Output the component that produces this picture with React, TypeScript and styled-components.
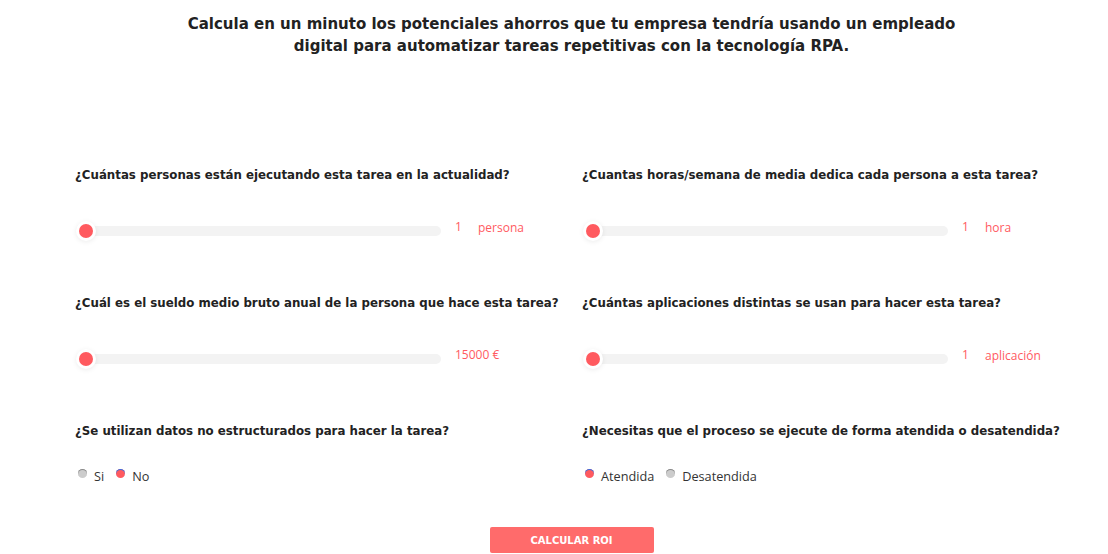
import React, { useState } from 'react'
import styled, { createGlobalStyle } from 'styled-components'

const GlobalStyle = createGlobalStyle`
  body {
    margin: 0;
    background: #ffffff;
    font-family: "Open Sans", "Liberation Sans", sans-serif;
  }
`

const Page = styled.div`
  width: 993px;
  margin-left: 75px;
  padding-top: 13px;
`

const Title = styled.h1`
  margin: 0 auto;
  width: 800px;
  text-align: center;
  font-family: "DejaVu Sans", sans-serif;
  font-weight: 700;
  font-size: 15px;
  line-height: 22px;
  color: #222222;
`

const Form = styled.div`
  display: grid;
  grid-template-columns: 507px 486px;
  row-gap: 52px;
  margin-top: 108px;
`

const Field = styled.div`
  display: flex;
  flex-direction: column;
`

const Question = styled.div`
  font-family: "DejaVu Sans", sans-serif;
  font-weight: 700;
  font-size: 11.8px;
  line-height: 20px;
  color: #222222;
  white-space: nowrap;
`

const SliderRow = styled.div`
  display: flex;
  align-items: center;
  height: 20px;
  margin-top: 36px;
`

const Track = styled.div`
  position: relative;
  width: 363px;
  height: 10px;
  margin-left: 3px;
  border-radius: 5px;
  background: #f3f3f3;
`

const Thumb = styled.span`
  position: absolute;
  left: 1px;
  top: -2px;
  width: 14px;
  height: 14px;
  border-radius: 50%;
  background: #ff5a5f;
  box-shadow: 0 0 0 3px #ffffff, 0 1px 5px 3px rgba(0, 0, 0, 0.08);
`

const Value = styled.span`
  min-width: 23px;
  margin-left: 14px;
  margin-top: -9px;
  font-size: 12px;
  color: #ff5a5f;
  white-space: nowrap;
`

const Unit = styled.span`
  margin-top: -7px;
  font-size: 12px;
  color: #ff5a5f;
`

const RadioRow = styled.div`
  display: flex;
  align-items: center;
  height: 20px;
  margin-top: 25px;
  padding-left: 3px;
  gap: 12px;
`

const RadioLabel = styled.label`
  display: flex;
  align-items: center;
  gap: 7px;
  font-size: 12.7px;
  color: #333333;
  cursor: pointer;
`

const Dot = styled.span<{ $on: boolean }>`
  width: 9px;
  height: 9px;
  margin-top: -5px;
  border-radius: 50%;
  background: ${({ $on }) => ($on ? '#ff5a5f' : '#cccccc')};
  box-shadow: ${({ $on }) =>
    $on ? 'inset 0 1px 0 0 #3b6fe0' : 'inset 0 1px 0 0 #8a8a8a'};
`

const ButtonRow = styled.div`
  display: flex;
  justify-content: center;
  margin-top: 41px;
`

const Button = styled.button`
  width: 164px;
  height: 26px;
  border: none;
  border-radius: 2px;
  background: #ff6b6b;
  color: #ffffff;
  font-family: "DejaVu Sans", sans-serif;
  font-weight: 700;
  font-size: 10px;
  padding-top: 2px;
  cursor: pointer;
`

type SliderProps = { question: string; value: string; unit?: string }

const SliderField: React.FC<SliderProps> = ({ question, value, unit }) => (
  <Field>
    <Question>{question}</Question>
    <SliderRow>
      <Track>
        <Thumb />
      </Track>
      <Value>{value}</Value>
      {unit && <Unit>{unit}</Unit>}
    </SliderRow>
  </Field>
)

type RadioProps = { question: string; options: string[]; initial: string }

const RadioField: React.FC<RadioProps> = ({ question, options, initial }) => {
  const [picked, setPicked] = useState(initial)
  return (
    <Field>
      <Question>{question}</Question>
      <RadioRow>
        {options.map(o => (
          <RadioLabel key={o} onClick={() => setPicked(o)}>
            <Dot $on={picked === o} />
            {o}
          </RadioLabel>
        ))}
      </RadioRow>
    </Field>
  )
}

const App: React.FC = () => (
  <>
    <GlobalStyle />
    <Page>
      <Title>
        Calcula en un minuto los potenciales ahorros que tu empresa tendría usando un empleado digital para
        automatizar tareas repetitivas con la tecnología RPA.
      </Title>
      <Form>
        <SliderField question="¿Cuántas personas están ejecutando esta tarea en la actualidad?" value="1" unit="persona" />
        <SliderField question="¿Cuantas horas/semana de media dedica cada persona a esta tarea?" value="1" unit="hora" />
        <SliderField question="¿Cuál es el sueldo medio bruto anual de la persona que hace esta tarea?" value="15000 €" />
        <SliderField question="¿Cuántas aplicaciones distintas se usan para hacer esta tarea?" value="1" unit="aplicación" />
        <RadioField question="¿Se utilizan datos no estructurados para hacer la tarea?" options={['Si', 'No']} initial="No" />
        <RadioField
          question="¿Necesitas que el proceso se ejecute de forma atendida o desatendida?"
          options={['Atendida', 'Desatendida']}
          initial="Atendida"
        />
      </Form>
      <ButtonRow>
        <Button>CALCULAR ROI</Button>
      </ButtonRow>
    </Page>
  </>
)

export default App
